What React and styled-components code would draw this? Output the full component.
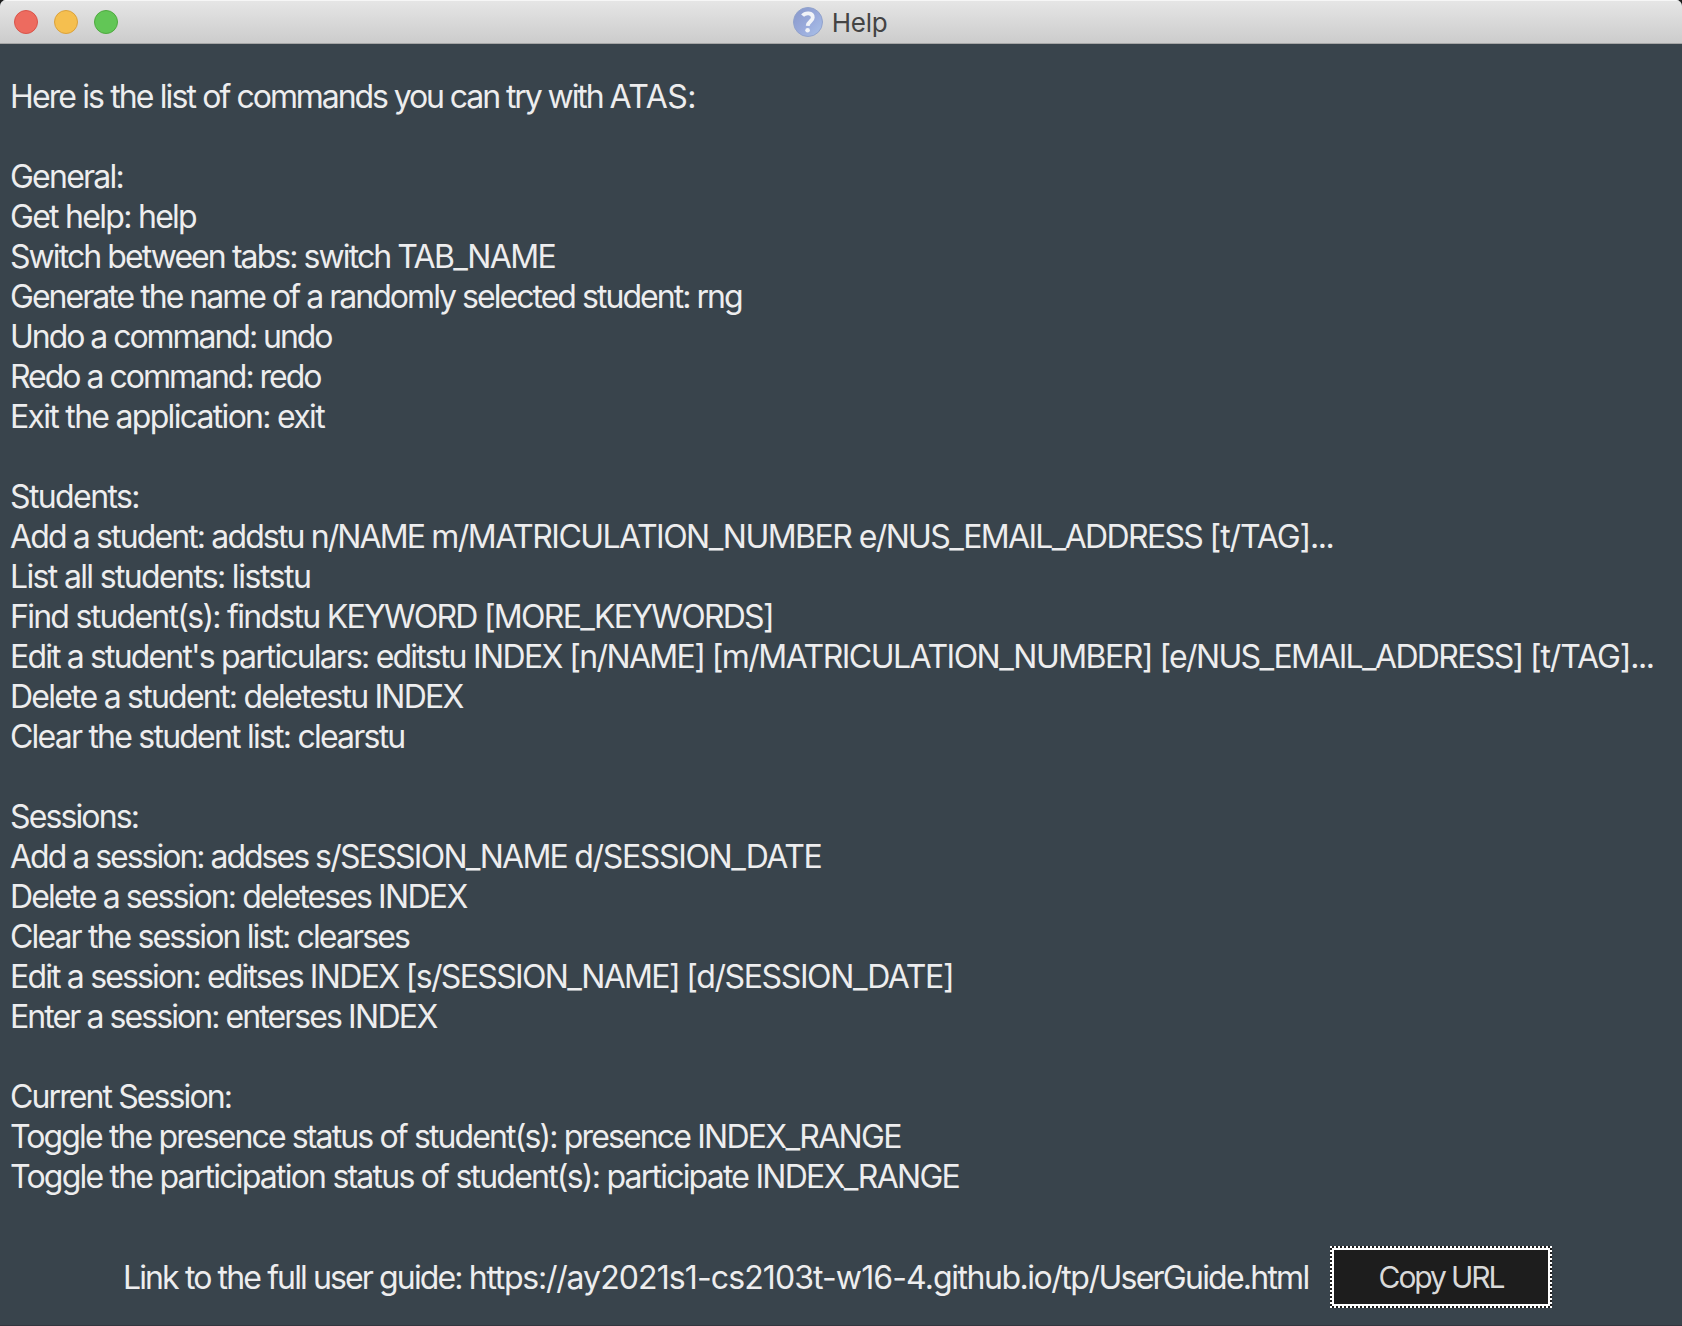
import React from "react";
import styled, { createGlobalStyle } from "styled-components";

const GlobalStyle = createGlobalStyle`
  *, *::before, *::after { box-sizing: border-box; }
  body { margin: 0; background: #1c1c1c; font-family: Inter, "Liberation Sans", sans-serif; }
`;

const Window = styled.main`
  display: flex;
  flex-direction: column;
  width: 1682px;
  height: 1326px;
  overflow: hidden;
  border-radius: 6px 6px 0 0;
  background: #39444c;
  border-bottom: 1px solid #33363f;
`;

const TitleBar = styled.header`
  display: grid;
  grid-template-columns: 1fr auto 1fr;
  align-items: center;
  height: 44px;
  flex: none;
  padding: 1px 16px 0 14px;
  border-bottom: 1px solid #a6a6a6;
  background: linear-gradient(#e6e6e6, #cccccc);
  box-shadow: inset 0 1px #f6f6f6;
`;

const Lights = styled.div`
  display: flex;
  gap: 16px;
`;

const Light = styled.span`
  width: 24px;
  height: 24px;
  border-radius: 50%;
  background: ${(p) => p.$fill};
  border: 1px solid ${(p) => p.$rim};
`;

const Title = styled.h1`
  display: flex;
  align-items: center;
  gap: 9px;
  margin: 0;
  color: #444;
  font-size: 26px;
  font-weight: 400;
  line-height: 40px;
  letter-spacing: -0.3px;
`;

const TitleText = styled.span`
  padding-top: 1px;
`;

const Content = styled.section`
  display: flex;
  flex-direction: column;
  gap: 40px;
  padding: 33px 0 0 10px;
  color: #ededee;
  font-size: 32px;
  line-height: 40px;
`;

const Group = styled.div`
  display: flex;
  flex-direction: column;
`;

const Line = styled.p`
  margin: 0;
  white-space: pre;
  font-variant-ligatures: none;
`;

const Run = styled.span`
  letter-spacing: ${(p) => p.$tracking}px;
`;

const Footer = styled.footer`
  display: flex;
  align-items: center;
  margin-top: 49px;
  padding-left: 123px;
  gap: 20px;
  color: #ededee;
  font-size: 32px;
  line-height: 40px;
`;

const GuideLink = styled.div`
  width: 1187px;
  padding-top: 2px;
`;

const dash = (dir) => `repeating-linear-gradient(${dir}, #fff 0 2px, #1d1d1d 2px 4px)`;

const CopyButton = styled.button`
  width: 222px;
  height: 62px;
  padding: 2px;
  border: 0;
  color: #d9d9d9;
  font: 400 30px/54px Inter, "Liberation Sans", sans-serif;
  letter-spacing: -2.1px;
  background:
    ${dash("90deg")} 0 0 / 100% 2px no-repeat,
    ${dash("90deg")} 0 100% / 100% 2px no-repeat,
    ${dash("180deg")} 0 0 / 2px 100% no-repeat,
    ${dash("180deg")} 100% 0 / 2px 100% no-repeat,
    #1d1d1d;
`;

const ButtonFace = styled.span`
  display: block;
  height: 58px;
  border: 2px solid #fff;
`;

const line = (...runs) => ({ runs });

const groups = [
  [line(["Here is the list of ", -1.88], ["commands you can try with ", -2.09], ["ATAS:", -0.5])],
  [
    line(["General:", -1.77]),
    line(["Get help: help", -1.72]),
    line(["Switch between tabs: switch ", -1.93], ["TAB_NAME", -1.66]),
    line(["Generate the name of a randomly selected student: rng", -1.97]),
    line(["Undo a command: undo", -2.04]),
    line(["Redo a command: redo", -2.01]),
    line(["Exit the application: exit", -1.71]),
  ],
  [
    line(["Students:", -1.6]),
    line(
      ["Add a student: addstu n/NAME ", -1.87],
      ["m/MATRICULATION_NUMBER ", -1.52],
      ["e/NUS_EMAIL_ADDRESS ", -1.66],
      ["[t/TAG]", -1.1],
      ["...", -1.5]
    ),
    line(["List all students: ", -1.66], ["liststu", -1.45]),
    line(["Find student(s): findstu KEYWORD [MORE_KEYWORDS]", -1.73]),
    line(
      ["Edit a student's particulars: ", -1.85],
      ["editstu ", -1.76],
      ["INDEX [n/NAME] ", -1.62],
      ["[m/MATRICULATION_NUMBER] ", -1.52],
      ["[e/NUS_EMAIL_ADDRESS] ", -1.66],
      ["[t/TAG]", -1.1],
      ["...", -1.5]
    ),
    line(["Delete a student: deletestu INDEX", -1.76]),
    line(["Clear the student list: clearstu", -1.78]),
  ],
  [
    line(["Sessions:", -1.88]),
    line(["Add a session: addses ", -2.01], ["s/SESSION_NAME ", -1.74], ["d/SESSION_DATE", -1.35]),
    line(["Delete a session: deleteses ", -1.9], ["INDEX", -1.67]),
    line(["Clear the session list: clearses", -1.87]),
    line(["Edit a session: editses ", -1.84], ["INDEX [s/SESSION_NAME] ", -1.66], ["[d/SESSION_DATE]", -1.38]),
    line(["Enter a session: enterses ", -1.93], ["INDEX", -1.67]),
  ],
  [
    line(["Current Session:", -1.9]),
    line(["Toggle the presence status of student(s): presence ", -1.87], ["INDEX_RANGE", -1.72]),
    line(["Toggle the participation status of student(s): participate ", -1.78], ["INDEX_RANGE", -1.7]),
  ],
];

const guide = line(
  ["Link to the full user guide: ", -1.88],
  ["https://", -1.27],
  ["ay2021s1-cs2103t-w16-4.", -0.89],
  ["github.io/tp/", -1.47],
  ["UserGuide.html", -1.77]
);

function TextLine({ runs }) {
  return (
    <Line>
      {runs.map(([text, tracking]) => (
        <Run key={text} $tracking={tracking}>{text}</Run>
      ))}
    </Line>
  );
}

function HelpIcon() {
  return (
    <svg width="30" height="30" viewBox="0 0 30 30" aria-hidden="true">
      <defs>
        <linearGradient id="orb" x1="0" y1="0" x2="1" y2="1">
          <stop offset="0" stopColor="#8797c9" />
          <stop offset="0.55" stopColor="#9aabdc" />
          <stop offset="1" stopColor="#abc3ea" />
        </linearGradient>
      </defs>
      <circle cx="15" cy="15" r="14.5" fill="url(#orb)" stroke="#92a3cc" />
      <path d="M9.6 8.6C12.2 5.4 19.8 5.2 19.8 10.4C19.8 14.2 15 14.2 14.7 18.9" fill="none" stroke="#f1f3f8" strokeWidth="3.8" />
      <circle cx="14.6" cy="23.2" r="2.3" fill="#f1f3f8" />
    </svg>
  );
}

export default function App() {
  return (
    <>
      <GlobalStyle />
      <Window>
        <TitleBar>
          <Lights>
            <Light $fill="#ed6b5f" $rim="#d9544a" />
            <Light $fill="#f5bf4f" $rim="#dba23c" />
            <Light $fill="#62c656" $rim="#4faa40" />
          </Lights>
          <Title>
            <HelpIcon />
            <TitleText>Help</TitleText>
          </Title>
        </TitleBar>
        <Content>
          {groups.map((lines) => (
            <Group key={lines[0].runs[0][0]}>
              {lines.map((item) => (
                <TextLine key={item.runs[0][0]} {...item} />
              ))}
            </Group>
          ))}
        </Content>
        <Footer>
          <GuideLink>
            <TextLine {...guide} />
          </GuideLink>
          <CopyButton>
            <ButtonFace>Copy URL</ButtonFace>
          </CopyButton>
        </Footer>
      </Window>
    </>
  );
}
